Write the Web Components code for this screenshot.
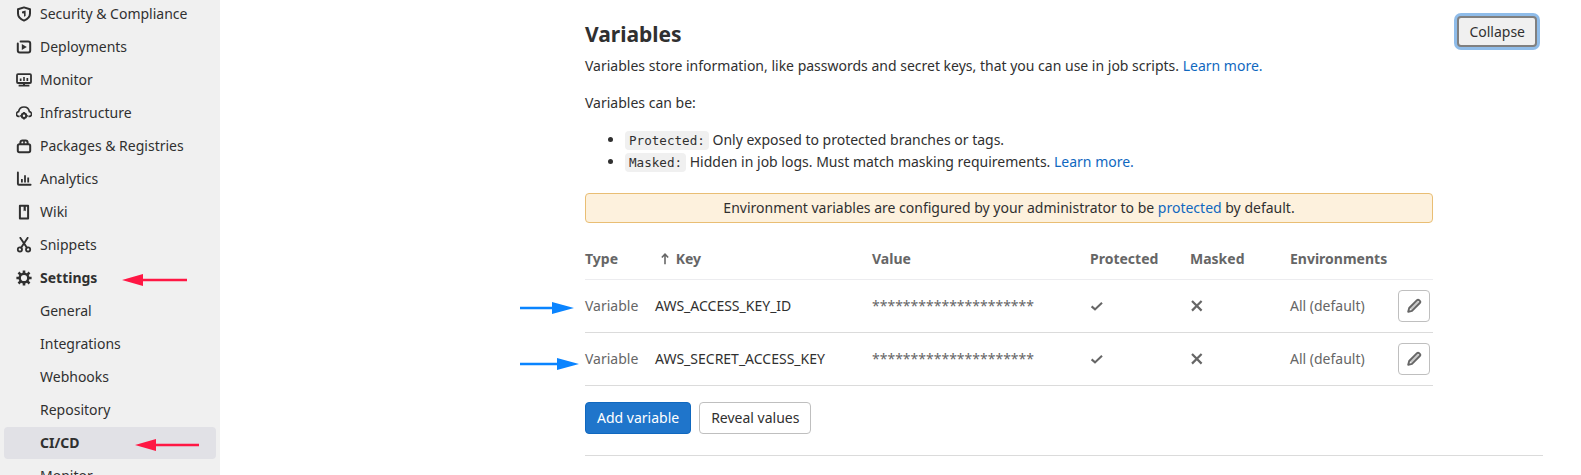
<!DOCTYPE html>
<html>
<head>
<meta charset="utf-8">
<title>Variables</title>
<style>
  html, body { margin: 0; height: 475px; overflow: hidden; background: #fff; }
  body { font: 14px/20px "Noto Sans", sans-serif; color: #303030; }
</style>
</head>
<body>
<app-page>
  <side-nav slot="nav">
    <nav-item icon="shield">Security &amp; Compliance</nav-item>
    <nav-item icon="deploy">Deployments</nav-item>
    <nav-item icon="monitor">Monitor</nav-item>
    <nav-item icon="cloud">Infrastructure</nav-item>
    <nav-item icon="package">Packages &amp; Registries</nav-item>
    <nav-item icon="chart">Analytics</nav-item>
    <nav-item icon="book">Wiki</nav-item>
    <nav-item icon="snippet">Snippets</nav-item>
    <nav-item icon="settings" strong>Settings</nav-item>
    <nav-item>General</nav-item>
    <nav-item>Integrations</nav-item>
    <nav-item>Webhooks</nav-item>
    <nav-item>Repository</nav-item>
    <nav-item active>CI/CD</nav-item>
    <nav-item>Monitor</nav-item>
  </side-nav>
  <variables-section>
    <var-row type="Variable" name="AWS_ACCESS_KEY_ID"></var-row>
    <var-row type="Variable" name="AWS_SECRET_ACCESS_KEY"></var-row>
  </variables-section>
  <mark-arrow color="#ff1744" style="left:122px;top:274px;width:65px"></mark-arrow>
  <mark-arrow color="#ff1744" style="left:135px;top:439px;width:64px"></mark-arrow>
  <mark-arrow color="#0a84ff" dir="right" style="left:520px;top:302px;width:54px"></mark-arrow>
  <mark-arrow color="#0a84ff" dir="right" style="left:520px;top:358px;width:59px"></mark-arrow>
</app-page>

<script>
// gitlab achtige iconen, 16x16, met stroke getekend
const ICONS = {
  shield: `<path d="M8 1.4 14 3.2v4.4c0 3.3-2.4 5.7-6 7-3.6-1.3-6-3.7-6-7V3.2z" fill="none" stroke-width="2" stroke-linejoin="round"/><path d="M6 5.4 9.6 4.4V10L8 10.8V7.6L6 7.2z" stroke="none"/>`,
  deploy: `<path d="M4.6 2.6h7.6a2 2 0 0 1 2 2v6.8a2 2 0 0 1-2 2H9.8M11.4 13.4H3.8a2 2 0 0 1-2-2V4.4" fill="none" stroke-width="2" stroke-linecap="round"/><path d="M5.8 5 10.8 8 5.8 11z" stroke="none"/>`,
  monitor: `<rect x="1" y="2.2" width="14" height="8.8" rx="1" fill="none" stroke-width="1.8"/><path d="M2.6 13.6h10.8" fill="none" stroke-width="1.8"/><path d="M7 10.5h2v3H7zM3.8 6.6h1.7V9H3.8zM7.2 5h1.6v4H7.2zM10.5 6h1.7v3h-1.7z" stroke="none"/>`,
  cloud: `<path d="M3.6 11.4H3A2.3 2.3 0 0 1 .9 7.7C1.3 7 2 6.7 2.6 6.6 3.1 3.9 5.3 2 8 2s4.9 1.9 5.4 4.6c.6.1 1.3.4 1.7 1.1a2.3 2.3 0 0 1-2.1 3.7h-.6" fill="none" stroke-width="1.7"/><circle cx="8" cy="10.8" r="2.2" fill="none" stroke-width="2"/><path d="M7.1 6.9h1.8v1.6H7.1zM7.1 13h1.8v1.6H7.1zM4.2 9.9h1.6v1.8H4.2zM10.2 9.9h1.6v1.8h-1.6z" stroke="none"/>`,
  package: `<rect x="1.8" y="6.2" width="12.4" height="8" rx="1.6" fill="none" stroke-width="2"/><path d="M4.4 6.2V4.4a2 2 0 0 1 2-2h3.2a2 2 0 0 1 2 2v1.8" fill="none" stroke-width="2"/><path d="M7.2 2.4h1.6v3.8H7.2z" stroke="none"/>`,
  chart: `<path d="M1.9 1.4v11.4a1 1 0 0 0 1 1h11.7" fill="none" stroke-width="1.9" stroke-linecap="round"/><path d="M5 8h1.8v3.6H5zM8.1 4.2h1.8v7.4H8.1zM11.3 6.6h1.8v5h-1.8z" stroke="none"/>`,
  book: `<path d="M3.9 1.8h8.2v12.6H3.9z" fill="none" stroke-width="2" stroke-linejoin="round"/><path d="M7.6 1.8h2.2v5.4l-1.1-.8-1.1.8z" stroke="none"/>`,
  snippet: `<circle cx="3.9" cy="12.4" r="2.1" fill="none" stroke-width="1.8"/><circle cx="12.1" cy="12.4" r="2.1" fill="none" stroke-width="1.8"/><path d="M5.2 10.6 11.6 .9M10.8 10.6 4.4 .9" fill="none" stroke-width="1.9" stroke-linecap="round"/>`,
  settings: `<circle cx="8" cy="8" r="4.3" fill="none" stroke-width="2.4"/><path d="M6.7.4h2.6v3H6.7zM6.7 12.6h2.6v3H6.7zM.4 6.7h3v2.6h-3zM12.6 6.7h3v2.6h-3zM1.6 3.4 3.4 1.6l2.1 2.1-1.8 1.8zM10.5 12.3l1.8-1.8 2.1 2.1-1.8 1.8zM12.6 1.6l1.8 1.8-2.1 2.1-1.8-1.8zM3.7 10.5l1.8 1.8-2.1 2.1-1.8-1.8z" stroke="none"/>`,
  pencil: `<path d="M11 2.2a1.5 1.5 0 0 1 2.1 0l.7.7a1.5 1.5 0 0 1 0 2.1L6 12.8l-3.8 1 1-3.8z" fill="none" stroke-width="1.9" stroke-linejoin="round"/><path d="M3.6 10.2 11.4 2.4l2.2 2.2-7.8 7.8z" stroke="none" opacity=".35"/>`,
  check: `<path d="M2.6 8.4 6 11.4 13 4.8" fill="none" stroke-width="2.1"/>`,
  close: `<path d="M3 3 12.6 12.6M12.6 3 3 12.6" fill="none" stroke-width="2.2"/>`,
  up: `<path d="M8 14V3M4.4 6.2 8 2.4l3.6 3.8" fill="none" stroke-width="1.8"/>`
}
const icon = (name, size = 16) => `<svg width="${size}" height="${size}" viewBox="0 0 16 16" fill="currentColor" stroke="currentColor" aria-hidden="true">${ICONS[name]}</svg>`

// pagina: zijbalk links, inhoud rechts
class AppPage extends HTMLElement {
  constructor() {
    super()
    this.attachShadow({ mode: "open" }).innerHTML = `
      <style>
        :host { display: flex; position: relative; height: 475px; overflow: hidden; }
        .main { flex: 1; min-width: 0; padding-left: 365px; }
      </style>
      <slot name="nav"></slot>
      <div class="main"><slot></slot></div>`
  }
}
customElements.define("app-page", AppPage)

class SideNav extends HTMLElement {
  constructor() {
    super()
    this.attachShadow({ mode: "open" }).innerHTML = `
      <style>
        :host { display: flex; flex-direction: column; flex: none; box-sizing: border-box; width: 220px; height: 475px; padding: 0 4px; background: #f0f0f0; overflow: hidden; }
        .shift { display: flex; flex-direction: column; gap: 1px; margin-top: -2px; }
      </style>
      <div class="shift"><slot></slot></div>`
  }
}
customElements.define("side-nav", SideNav)

class NavItem extends HTMLElement {
  constructor() {
    super()
    const name = this.getAttribute("icon")
    this.attachShadow({ mode: "open" }).innerHTML = `
      <style>
        :host { display: flex; align-items: center; flex: none; height: 32px; padding-left: 12px; border-radius: 4px; color: #303030; }
        :host([strong]), :host([active]) { font-weight: 700; }
        :host([active]) { background: #e1e1e6; }
        .ico { width: 16px; height: 16px; margin-right: 8px; flex: none; }
        svg { display: block; }
      </style>
      <span class="ico">${name ? icon(name) : ""}</span><slot></slot>`
  }
}
customElements.define("nav-item", NavItem)

class PlainButton extends HTMLElement {
  constructor() {
    super()
    this.attachShadow({ mode: "open" }).innerHTML = `
      <style>
        :host { display: inline-flex; align-items: center; justify-content: center; box-sizing: border-box; height: 32px; padding: 0 11px; border-radius: 4px; background: #fff; border: 1px solid #bfbfbf; color: #303030; white-space: nowrap; }
        :host([primary]) { background: #1f75cb; border-color: #1068bf; color: #fff; }
        :host([focused]) { background: #f0f0f0; border: 2px solid #808080; box-shadow: 0 0 0 3px #8fbce9; height: 31px; padding: 0 10px; }
        :host([square]) { width: 32px; padding: 0; color: #666; }
      </style>
      <slot></slot>`
  }
}
customElements.define("plain-button", PlainButton)

class VarRow extends HTMLElement {
  constructor() {
    super()
    this.attachShadow({ mode: "open" }).innerHTML = `
      <style>
        :host { display: grid; grid-template-columns: 70px 217px 218px 100px 100px 108px 32px; align-items: center; height: 52px; border-bottom: 1px solid #dbdbdb; color: #666; }
        .key { color: #303030; }
        svg { display: block; margin-left: -1px; }
        plain-button svg { margin: 0; }
      </style>
      <span>${this.getAttribute("type")}</span>
      <span class="key">${this.getAttribute("name")}</span>
      <span>*********************</span>
      <span>${icon("check")}</span>
      <span>${icon("close")}</span>
      <span>All (default)</span>
      <plain-button square>${icon("pencil")}</plain-button>`
  }
}
customElements.define("var-row", VarRow)

class VariablesSection extends HTMLElement {
  constructor() {
    super()
    this.attachShadow({ mode: "open" }).innerHTML = `
      <style>
        :host { display: block; box-sizing: border-box; width: 958px; height: 456px; border-bottom: 1px solid #dbdbdb; }
        .head { display: flex; justify-content: space-between; align-items: flex-start; padding: 16px 6px 0 0; height: 41px; }
        h4 { margin: 2px 0 0; font-size: 21px; line-height: 32px; font-weight: 700; }
        .body { width: 848px; }
        p { margin: 0 0 17px; line-height: 20px; }
        ul { margin: -1px 0 20px; padding: 0 0 0 40px; line-height: 22px; }
        code { font: 12.6px "DejaVu Sans Mono", monospace; background: #f0f0f0; border-radius: 4px; padding: 2px 4px; }
        a { color: #1068bf; text-decoration: none; }
        .alert { box-sizing: border-box; height: 30px; border: 1px solid #e9be74; border-radius: 4px; background: #fdf1dd; text-align: center; line-height: 28px; margin-bottom: 18px; }
        .thead { display: grid; grid-template-columns: 70px 217px 218px 100px 100px 140px; align-items: center; height: 36px; padding-bottom: 2px; border-bottom: 1px solid #ececef; color: #666; font-weight: 700; }
        .thead svg { vertical-align: -2px; margin: 0 0 0 3px; }
        .actions { display: flex; gap: 8px; padding-top: 16px; }
      </style>
      <div class="head">
        <h4>Variables</h4>
        <plain-button focused>Collapse</plain-button>
      </div>
      <div class="body">
        <p style="margin-top:-1px">Variables store information, like passwords and secret keys, that you can use in job scripts. <a>Learn more.</a></p>
        <p>Variables can be:</p>
        <ul>
          <li><code>Protected:</code> Only exposed to protected branches or tags.</li>
          <li><code>Masked:</code> Hidden in job logs. Must match masking requirements. <a>Learn more.</a></li>
        </ul>
        <div class="alert">Environment variables are configured by your administrator to be <a>protected</a> by default.</div>
        <div class="thead">
          <span>Type</span><span>${icon("up", 14)} Key</span><span>Value</span><span>Protected</span><span>Masked</span><span>Environments</span>
        </div>
        <slot></slot>
        <div class="actions">
          <plain-button primary>Add variable</plain-button>
          <plain-button>Reveal values</plain-button>
        </div>
      </div>`
  }
}
customElements.define("variables-section", VariablesSection)

// annotatie pijl die over de pagina ligt
class MarkArrow extends HTMLElement {
  constructor() {
    super()
    const color = this.getAttribute("color")
    const right = this.getAttribute("dir") === "right"
    const w = parseInt(this.style.width)
    const path = right
      ? `<path d="M0 4.8H${w - 22}V0L${w} 6 ${w - 22} 12V7.2H0z"/>`
      : `<path d="M0 6 21 0V4.8H${w}V7.2H21V12z"/>`
    this.attachShadow({ mode: "open" }).innerHTML = `
      <style>
        :host { position: absolute; display: block; height: 12px; }
        svg { display: block; }
      </style>
      <svg width="${w}" height="12" viewBox="0 0 ${w} 12" fill="${color}">${path}</svg>`
  }
}
customElements.define("mark-arrow", MarkArrow)
</script>
</body>
</html>
